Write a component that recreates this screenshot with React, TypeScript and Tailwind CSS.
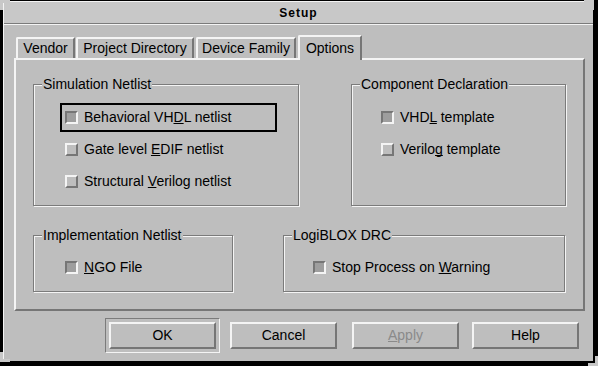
import type { ReactNode } from "react";

const TABS = [
  { label: "Vendor", w: "w-[59px]", ml: "ml-0" },
  { label: "Project Directory", w: "w-[118px]", ml: "ml-[1px]" },
  { label: "Device Family", w: "w-[100px]", ml: "ml-[2px]" },
];

function Box({ on }: { on?: boolean }) {
  return on ? (
    <span className="inline-block h-[13px] w-[13px] shrink-0 border-2 border-t-[#767676] border-l-[#767676] border-b-[#f4f4f4] border-r-[#f4f4f4] bg-[#9e9e9e]" />
  ) : (
    <span className="inline-block h-[13px] w-[13px] shrink-0 border-2 border-t-[#f4f4f4] border-l-[#f4f4f4] border-b-[#767676] border-r-[#767676]" />
  );
}

function Check({ on, children, focus }: { on?: boolean; children: ReactNode; focus?: boolean }) {
  return (
    <div
      className={
        focus
          ? "flex h-[29px] w-[217px] items-center gap-[6px] border-2 border-black pl-[3px]"
          : "flex h-[29px] items-center gap-[6px] border-2 border-transparent pl-[3px]"
      }
    >
      <Box on={on} />
      <span>{children}</span>
    </div>
  );
}

function Group({ label, className, children }: { label: string; className: string; children: ReactNode }) {
  return (
    <div className={`relative border border-[#7b7b7b] shadow-[inset_1px_1px_0_#f4f4f4,1px_1px_0_#f4f4f4] ${className}`}>
      <span className="absolute left-[8px] top-[-9px] bg-[#bebebe] px-px leading-[16px]">{label}</span>
      {children}
    </div>
  );
}

function Btn({ children, disabled }: { children: ReactNode; disabled?: boolean }) {
  return (
    <div
      className={`flex h-[27px] w-[107px] items-center justify-center border-2 border-t-[#f4f4f4] border-l-[#f4f4f4] border-b-[#767676] border-r-[#767676] ${
        disabled ? "text-[#8a8a8a]" : "text-black"
      }`}
    >
      {children}
    </div>
  );
}

export default function App() {
  return (
    <div className="relative h-[366px] w-[598px] bg-black pb-[5px] pl-[3px] pr-[5px] pt-px font-['Liberation_Sans',Arial,sans-serif] text-[14px] text-black [text-decoration-skip-ink:none]">
      <div className="flex h-full flex-col border-l border-t border-[#f4f4f4] bg-[#bebebe]">
        {/* title bar */}
        <div className="flex h-[21px] items-center justify-center bg-[#c8c8c8] text-[12px] font-bold tracking-[1px]">
          Setup
        </div>
        <div className="border-t border-b border-t-[#7b7b7b] border-b-[#f4f4f4]" />

        {/* tabs */}
        <div className="ml-[12px] mt-[10px] flex h-[23px] items-end">
          {TABS.map((t) => (
            <div
              key={t.label}
              className={`${t.w} ${t.ml} flex h-[21px] items-center justify-center rounded-tl-[2px] border-l-2 border-r-2 border-t-2 border-l-[#f4f4f4] border-t-[#f4f4f4] border-r-[#767676]`}
            >
              {t.label}
            </div>
          ))}
          <div className="relative z-10 mb-[-2px] ml-[2px] flex h-[25px] w-[64px] items-start justify-center rounded-tl-[2px] border-l-2 border-r-2 border-t-2 border-l-[#f4f4f4] border-t-[#f4f4f4] border-r-[#767676] bg-[#bebebe] pt-[1px]">
            Options
          </div>
        </div>

        {/* panel */}
        <div className="ml-[10px] h-[253px] w-[571px] border-2 border-t-[#f4f4f4] border-l-[#f4f4f4] border-b-[#767676] border-r-[#767676] pl-[17px] pt-[24px]">
          <div className="flex">
            <Group label="Simulation Netlist" className="h-[122px] w-[266px] pl-[26px] pt-[18px]">
              <div className="flex flex-col gap-[3px]">
                <Check on focus>
                  Behavioral VH<u>D</u>L netlist
                </Check>
                <Check>
                  Gate level <u>E</u>DIF netlist
                </Check>
                <Check>
                  Structural <u>V</u>erilog netlist
                </Check>
              </div>
            </Group>
            <Group label="Component Declaration" className="ml-[52px] h-[122px] w-[215px] pl-[24px] pt-[18px]">
              <div className="flex flex-col gap-[3px]">
                <Check on>
                  VHD<u>L</u> template
                </Check>
                <Check>
                  Verilo<u>g</u> template
                </Check>
              </div>
            </Group>
          </div>
          <div className="mt-[29px] flex">
            <Group label="Implementation Netlist" className="h-[57px] w-[200px] pl-[26px] pt-[17px]">
              <Check on>
                <u>N</u>GO File
              </Check>
            </Group>
            <Group label="LogiBLOX DRC" className="ml-[50px] h-[57px] w-[282px] pl-[24px] pt-[17px]">
              <Check on>
                Stop Process on <u>W</u>arning
              </Check>
            </Group>
          </div>
        </div>

        {/* buttons */}
        <div className="mt-[7px] flex items-center pl-[101px]">
          <div className="border border-t-[#7b7b7b] border-l-[#7b7b7b] border-b-[#f4f4f4] border-r-[#f4f4f4] p-[3px]">
            <Btn>OK</Btn>
          </div>
          <div className="ml-[10px]">
            <Btn>Cancel</Btn>
          </div>
          <div className="ml-[15px]">
            <Btn disabled>
              <u>A</u>pply
            </Btn>
          </div>
          <div className="ml-[13px]">
            <Btn>Help</Btn>
          </div>
        </div>
      </div>

      {/* resize corner handles */}
      <div className="absolute left-0 top-0 h-[10px] w-[10px] border-l-[3px] border-t-[3px] border-[#c8c8c8]" />
      <div className="absolute right-[4px] top-0 h-[10px] w-[10px] border-r-[3px] border-t-[3px] border-[#c8c8c8]" />
      <div className="absolute bottom-[4px] left-0 h-[10px] w-[10px] border-b-[3px] border-l-[3px] border-[#c8c8c8]" />
      <div className="absolute bottom-0 right-0 h-[10px] w-[10px] border-b-[3px] border-r-[3px] border-[#c8c8c8]" />
    </div>
  );
}
